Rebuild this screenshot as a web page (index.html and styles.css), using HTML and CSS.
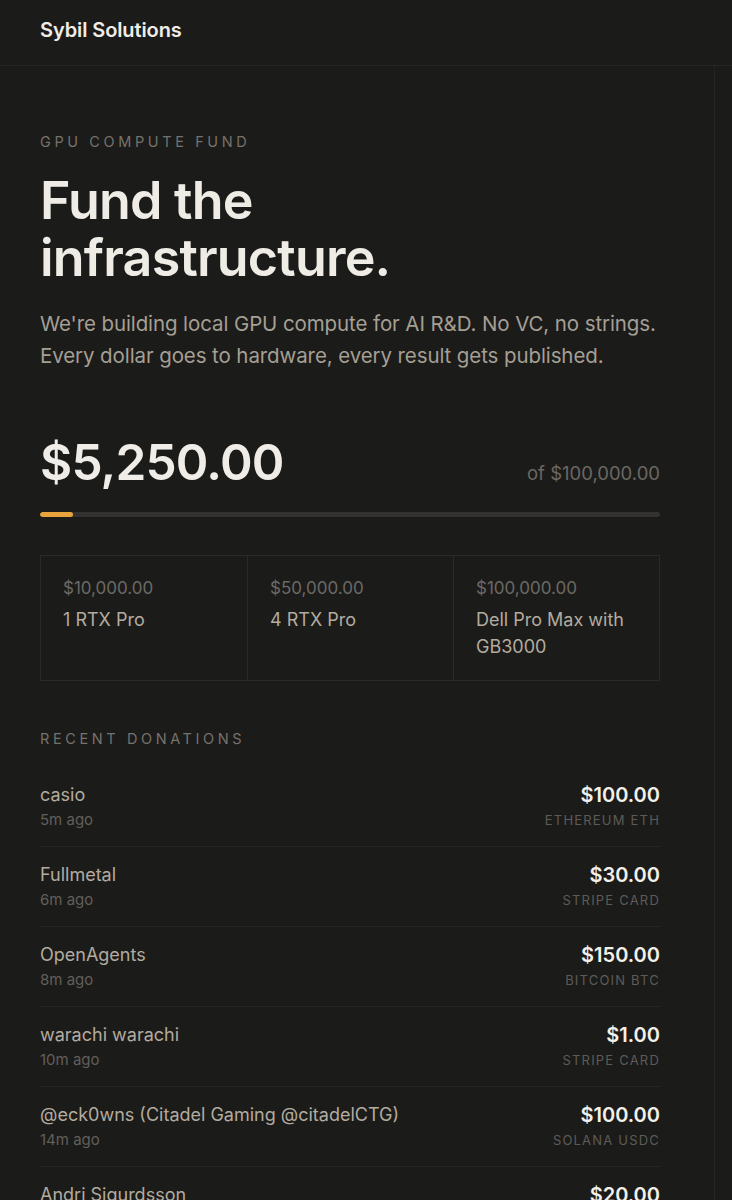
FILE: index.html
```html
<!DOCTYPE html>
<html lang="en">
<head>
<meta charset="utf-8">
<title>Sybil Solutions — GPU Compute Fund</title>
<link rel="stylesheet" href="styles.css">
</head>
<body>
<header class="topbar">
  <div class="brand">Sybil Solutions</div>
</header>
<div class="layout">
  <main class="main">
    <div class="content">
      <div class="eyebrow">GPU COMPUTE FUND</div>
      <h1 class="title">Fund the infrastructure.</h1>
      <p class="lede">We're building local GPU compute for AI R&amp;D. No VC, no strings. Every dollar goes to hardware, every result gets published.</p>

      <div class="totals">
        <div class="raised">$5,250.00</div>
        <div class="goal">of $100,000.00</div>
      </div>
      <div class="progress"><div class="progress-fill" style="width:5.25%"></div></div>

      <div class="milestones">
        <div class="milestone">
          <div class="ms-price">$10,000.00</div>
          <div class="ms-name">1 RTX Pro</div>
        </div>
        <div class="milestone">
          <div class="ms-price">$50,000.00</div>
          <div class="ms-name">4 RTX Pro</div>
        </div>
        <div class="milestone">
          <div class="ms-price">$100,000.00</div>
          <div class="ms-name">Dell Pro Max with GB3000</div>
        </div>
      </div>

      <div class="eyebrow section-label">RECENT DONATIONS</div>
      <ul class="donations">
        <li class="donation">
          <div class="who"><div class="name">casio</div><div class="time">5m ago</div></div>
          <div class="what"><div class="amount">$100.00</div><div class="method">ETHEREUM ETH</div></div>
        </li>
        <li class="donation">
          <div class="who"><div class="name">Fullmetal</div><div class="time">6m ago</div></div>
          <div class="what"><div class="amount">$30.00</div><div class="method">STRIPE CARD</div></div>
        </li>
        <li class="donation">
          <div class="who"><div class="name">OpenAgents</div><div class="time">8m ago</div></div>
          <div class="what"><div class="amount">$150.00</div><div class="method">BITCOIN BTC</div></div>
        </li>
        <li class="donation">
          <div class="who"><div class="name">warachi warachi</div><div class="time">10m ago</div></div>
          <div class="what"><div class="amount">$1.00</div><div class="method">STRIPE CARD</div></div>
        </li>
        <li class="donation">
          <div class="who"><div class="name">@eck0wns (Citadel Gaming @citadelCTG)</div><div class="time">14m ago</div></div>
          <div class="what"><div class="amount">$100.00</div><div class="method">SOLANA USDC</div></div>
        </li>
        <li class="donation">
          <div class="who"><div class="name">Andri Sigurdsson</div><div class="time">16m ago</div></div>
          <div class="what"><div class="amount">$20.00</div><div class="method">STRIPE CARD</div></div>
        </li>
      </ul>
    </div>
  </main>
</div>
</body>
</html>
```
FILE: styles.css
```css
* { box-sizing: border-box; }

html, body {
  margin: 0;
  padding: 0;
  background: #1b1b1a;
  color: #efece6;
  font-family: "Inter", "Liberation Sans", sans-serif;
  -webkit-font-smoothing: antialiased;
}

.topbar {
  height: 66px;
  border-bottom: 1px solid #272725;
  padding: 0 40px 6px 40px;
  display: flex;
  align-items: center;
}

.brand {
  font-size: 20px;
  font-weight: 600;
  color: #f0ede8;
  letter-spacing: -0.1px;
}

.layout {
  display: flex;
}

.main {
  width: 715px;
  border-right: 1px solid #252523;
  padding: 66px 40px 0 40px;
  min-height: 1200px;
}

.content {
  width: 620px;
}

.eyebrow {
  font-size: 14.5px;
  line-height: 20px;
  letter-spacing: 3.6px;
  color: #75726c;
  font-weight: 400;
}

.title {
  margin: 20px 0 0 0;
  max-width: 420px;
  font-size: 52px;
  line-height: 57px;
  font-weight: 600;
  letter-spacing: -0.8px;
  color: #efece6;
}

.lede {
  margin: 22px 0 0 0;
  font-size: 20.5px;
  line-height: 32px;
  color: #a59f94;
  letter-spacing: -0.1px;
}

.totals {
  margin-top: 66px;
  display: flex;
  justify-content: space-between;
  align-items: baseline;
}

.raised {
  font-size: 49.5px;
  line-height: 48px;
  font-weight: 600;
  letter-spacing: -0.8px;
  color: #f0ede8;
}

.goal {
  font-size: 18.5px;
  color: #6b6863;
}

.progress {
  margin-top: 26px;
  height: 5px;
  border-radius: 3px;
  background: #333230;
  overflow: hidden;
}

.progress-fill {
  height: 100%;
  border-radius: 3px;
  background: #e8a33d;
}

.milestones {
  margin-top: 38px;
  display: grid;
  grid-template-columns: repeat(3, 1fr);
  border: 1px solid #2a2a28;
}

.milestone {
  padding: 20px 22px 20px 22px;
  border-left: 1px solid #2a2a28;
}

.milestone:first-child {
  border-left: none;
}

.ms-price {
  font-size: 17px;
  line-height: 24px;
  color: #6c6964;
}

.ms-name {
  margin-top: 6px;
  font-size: 18px;
  line-height: 27px;
  color: #b3ab9f;
}

.section-label {
  margin-top: 48px;
}

.donations {
  list-style: none;
  margin: 18px 0 0 0;
  padding: 0;
}

.donation {
  display: flex;
  justify-content: space-between;
  align-items: flex-start;
  padding: 16px 0 16px 0;
  border-bottom: 1px solid #272725;
}

.name {
  font-size: 18px;
  line-height: 24px;
  color: #b3ab9f;
}

.time {
  margin-top: 3px;
  font-size: 15px;
  line-height: 20px;
  color: #625f5a;
}

.what {
  text-align: right;
}

.amount {
  font-size: 20px;
  line-height: 24px;
  font-weight: 600;
  color: #f3f0ea;
}

.method {
  margin-top: 3px;
  font-size: 13px;
  line-height: 20px;
  letter-spacing: 1.2px;
  color: #5e5b56;
}
```
